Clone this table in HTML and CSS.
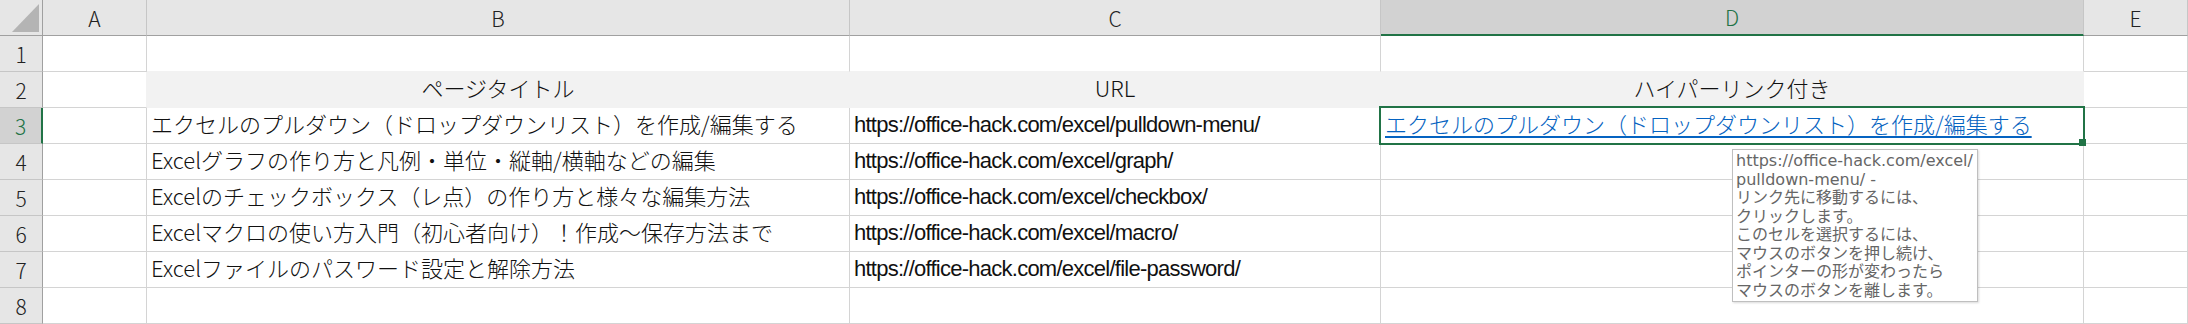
FILE: index.html
```html
<!DOCTYPE html>
<html lang="ja">
<head>
  <meta charset="UTF-8">
  <title>ハイパーリンク一覧</title>
  <link rel="stylesheet" href="styles.css">
</head>
<body>
  <div class="sheet">
    <!-- column headers -->
    <div class="corner"><span class="corner-tri"></span></div>
    <div class="colh">A</div>
    <div class="colh">B</div>
    <div class="colh">C</div>
    <div class="colh active">D</div>
    <div class="colh">E</div>

    <!-- row 1 -->
    <div class="rowh">1</div>
    <div class="cell"></div>
    <div class="cell above-fill"></div>
    <div class="cell above-fill"></div>
    <div class="cell above-fill"></div>
    <div class="cell"></div>

    <!-- row 2 -->
    <div class="rowh">2</div>
    <div class="cell beside-fill"></div>
    <div class="cell fill center">ページタイトル</div>
    <div class="cell fill center">URL</div>
    <div class="cell fill center">ハイパーリンク付き</div>
    <div class="cell"></div>

    <!-- row 3 -->
    <div class="rowh active">3</div>
    <div class="cell"></div>
    <div class="cell">エクセルのプルダウン（ドロップダウンリスト）を作成/編集する</div>
    <div class="cell url">https://office-hack.com/excel/pulldown-menu/</div>
    <div class="cell"><a class="link" href="#">エクセルのプルダウン（ドロップダウンリスト）を作成/編集する</a></div>
    <div class="cell"></div>

    <!-- row 4 -->
    <div class="rowh">4</div>
    <div class="cell"></div>
    <div class="cell">Excelグラフの作り方と凡例・単位・縦軸/横軸などの編集</div>
    <div class="cell url">https://office-hack.com/excel/graph/</div>
    <div class="cell"></div>
    <div class="cell"></div>

    <!-- row 5 -->
    <div class="rowh">5</div>
    <div class="cell"></div>
    <div class="cell">Excelのチェックボックス（レ点）の作り方と様々な編集方法</div>
    <div class="cell url">https://office-hack.com/excel/checkbox/</div>
    <div class="cell"></div>
    <div class="cell"></div>

    <!-- row 6 -->
    <div class="rowh">6</div>
    <div class="cell"></div>
    <div class="cell">Excelマクロの使い方入門（初心者向け）！作成〜保存方法まで</div>
    <div class="cell url">https://office-hack.com/excel/macro/</div>
    <div class="cell"></div>
    <div class="cell"></div>

    <!-- row 7 -->
    <div class="rowh">7</div>
    <div class="cell"></div>
    <div class="cell">Excelファイルのパスワード設定と解除方法</div>
    <div class="cell url">https://office-hack.com/excel/file-password/</div>
    <div class="cell"></div>
    <div class="cell"></div>

    <!-- row 8 -->
    <div class="rowh">8</div>
    <div class="cell"></div>
    <div class="cell"></div>
    <div class="cell"></div>
    <div class="cell"></div>
    <div class="cell"></div>

    <!-- active cell D3 -->
    <div class="selection"><span class="fill-handle"></span></div>

    <!-- hyperlink tooltip -->
    <div class="tooltip">
      <div>https://office-hack.com/excel/</div>
      <div>pulldown-menu/ -</div>
      <div>リンク先に移動するには、</div>
      <div>クリックします。</div>
      <div>このセルを選択するには、</div>
      <div>マウスのボタンを押し続け、</div>
      <div>ポインターの形が変わったら</div>
      <div>マウスのボタンを離します。</div>
    </div>
  </div>
</body>
</html>
```

FILE: styles.css
```css
* {
  box-sizing: border-box;
}
body {
  margin: 0;
  font-family: "Noto Sans CJK JP", "Noto Sans", sans-serif;
  background-color: #fff;
  color: #111;
}
.sheet {
  position: relative;
  display: grid;
  grid-template-columns: 43px 104px 703px 531px 703px 1fr;
  grid-auto-rows: 36px;
}
.corner {
  background-color: #e6e6e6;
  border-right: 1px solid #a0a0a0;
  border-bottom: 1px solid #a0a0a0;
  display: flex;
  justify-content: flex-end;
  align-items: flex-end;
  padding: 3px;
}
.corner-tri {
  width: 0;
  height: 0;
  border-left: 27px solid transparent;
  border-bottom: 28px solid #b4b4b4;
}
.colh {
  background-color: #e6e6e6;
  border-right: 1px solid #c6c6c6;
  border-bottom: 1px solid #a0a0a0;
  display: flex;
  align-items: center;
  justify-content: center;
  font-size: 21px;
  font-weight: 300;
  color: #222;
}
.colh.active {
  background-color: #d2d2d2;
  color: #217346;
  border-bottom: 2px solid #217346;
}
.rowh {
  background-color: #e6e6e6;
  border-right: 1px solid #a0a0a0;
  border-bottom: 1px solid #c6c6c6;
  display: flex;
  align-items: center;
  justify-content: center;
  font-size: 21px;
  font-weight: 300;
  color: #222;
}
.rowh.active {
  background-color: #d2d2d2;
  color: #217346;
  border-right: 2px solid #217346;
}
.cell {
  border-right: 1px solid #d4d4d4;
  border-bottom: 1px solid #d4d4d4;
  padding: 0 4px 5px;
  display: flex;
  align-items: center;
  font-size: 22px;
  font-weight: 300;
  white-space: nowrap;
}
.cell.url {
  font-family: "Liberation Sans", "Noto Sans CJK JP", sans-serif;
  font-size: 22px;
  font-weight: 400;
  letter-spacing: -0.75px;
  padding-bottom: 1px;
}
.cell.center {
  justify-content: center;
}
.cell.fill {
  background-color: #f2f2f2;
  border-color: #f2f2f2;
}
.cell.above-fill {
  border-bottom-color: #f2f2f2;
}
.cell.beside-fill {
  border-right-color: #f2f2f2;
}
.link {
  color: #0563c1;
  text-decoration: underline;
  text-underline-offset: 3px;
}
.selection {
  position: absolute;
  left: 1379px;
  top: 106px;
  width: 706px;
  height: 39px;
  border: 2px solid #217346;
}
.fill-handle {
  position: absolute;
  right: -3px;
  bottom: -3px;
  width: 7px;
  height: 7px;
  background-color: #217346;
}
.tooltip {
  position: absolute;
  left: 1732px;
  top: 149px;
  width: 246px;
  height: 153px;
  padding: 2px 3px;
  background-color: #fff;
  border: 1px solid #bfbfbf;
  box-shadow: 1px 1px 2px rgba(0,0,0,0.15);
  font-family: "DejaVu Sans", "Noto Sans CJK JP", sans-serif;
  font-size: 16px;
  line-height: 18.5px;
  color: #666;
  white-space: nowrap;
}
```
